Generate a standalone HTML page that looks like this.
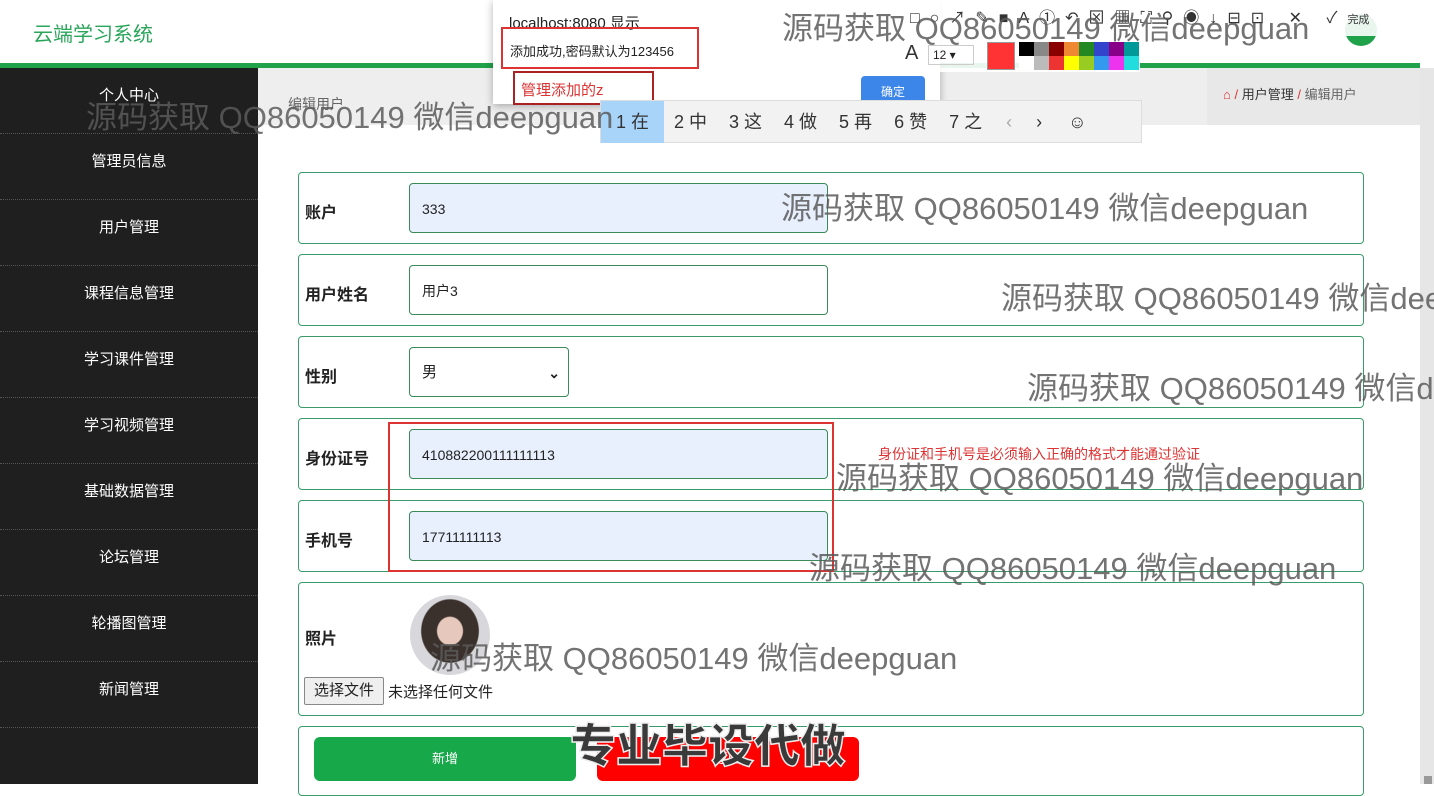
<!DOCTYPE html>
<html><head><meta charset="utf-8"><style>
*{box-sizing:border-box;margin:0;padding:0}
body{width:1434px;height:784px;overflow:hidden;position:relative;background:#fff;font-family:"Liberation Sans","Noto Sans CJK SC",sans-serif;color:#222}
.a{position:absolute}
.side{left:0;top:68px;width:258px;height:716px;background:#1e1f1e}
.si{position:absolute;left:0;width:258px;height:66px;color:#fff;font-size:15px;text-align:center;line-height:56px;border-bottom:1px dotted #555}
.row{position:absolute;left:298px;width:1066px;border:1.5px solid #3a9a6a;border-radius:4px;background:#fff}
.lbl{position:absolute;left:6px;font-weight:bold;font-size:16px}
.inp{position:absolute;left:110px;width:419px;height:50px;border:1px solid #3a8a5a;border-radius:4px;font-size:14px;padding-left:12px;line-height:50px}
.wm{position:absolute;color:rgba(90,90,90,.85);font-size:31px;white-space:nowrap;font-family:"Liberation Sans","Noto Sans CJK SC",sans-serif}
</style></head><body>
<div class="a" style="left:33px;top:18px;color:#2aa55a;font-size:20px">云端学习系统</div>
<div class="a" style="left:0;top:63px;width:1420px;height:5px;background:#1fa24a"></div>
<div class="a" style="left:1345px;top:14px;width:32px;height:32px;border-radius:50%;background:#1fa24a"></div>
<div class="a" style="left:1420px;top:68px;width:14px;height:716px;background:#e6e6e6"></div>
<div class="a" style="left:1424px;top:776px;width:8px;height:8px;background:#999"></div>
<div class="a side">
<div class="si" style="top:0">个人中心</div>
<div class="si" style="top:66px">管理员信息</div>
<div class="si" style="top:132px">用户管理</div>
<div class="si" style="top:198px">课程信息管理</div>
<div class="si" style="top:264px">学习课件管理</div>
<div class="si" style="top:330px">学习视频管理</div>
<div class="si" style="top:396px">基础数据管理</div>
<div class="si" style="top:462px">论坛管理</div>
<div class="si" style="top:528px">轮播图管理</div>
<div class="si" style="top:594px">新闻管理</div>
</div>
<div class="a" style="left:258px;top:68px;width:962px;height:57px;background:#eeeeee"></div>
<div class="a" style="left:288px;top:94px;color:#666;font-size:14px">编辑用户</div>
<div class="a" style="left:1207px;top:68px;width:213px;height:57px;background:#e8e8e8;font-size:13px;line-height:54px;padding-left:16px;color:#333"><span style="color:#d33">⌂ / </span>用户管理 <span style="color:#d33">/</span> <span style="color:#666">编辑用户</span></div>

<div class="row" style="top:172px;height:72px"><div class="lbl" style="top:26px">账户</div><div class="inp" style="top:10px;background:#e8f0fe">333</div></div>
<div class="row" style="top:254px;height:72px"><div class="lbl" style="top:26px">用户姓名</div><div class="inp" style="top:10px">用户3</div></div>
<div class="row" style="top:336px;height:72px"><div class="lbl" style="top:26px">性别</div><div class="inp" style="top:10px;width:160px;font-size:15px">男<span style="position:absolute;right:8px;font-size:14px;font-weight:bold">⌄</span></div></div>
<div class="row" style="top:418px;height:72px"><div class="lbl" style="top:26px">身份证号</div><div class="inp" style="top:10px;background:#e8f0fe">410882200111111113</div></div>
<div class="row" style="top:500px;height:72px"><div class="lbl" style="top:26px">手机号</div><div class="inp" style="top:10px;background:#e8f0fe">17711111113</div></div>
<div class="row" style="top:582px;height:134px"><div class="lbl" style="top:42px">照片</div>
<div class="a" style="left:111px;top:12px;width:80px;height:80px;border-radius:50%;background:radial-gradient(ellipse at 50% 45%,#e6c9bc 0 22%,#3a302c 24% 50%,#d8d8dc 52%)"></div>
<div class="a" style="left:5px;top:94px;width:80px;height:28px;border:1px solid #888;border-radius:2px;background:#efefef;font-size:15px;text-align:center;line-height:26px">选择文件</div>
<div class="a" style="left:89px;top:98px;font-size:15px">未选择任何文件</div></div>
<div class="row" style="top:726px;height:70px">
<div class="a" style="left:15px;top:10px;width:262px;height:44px;background:#17a84a;border-radius:6px;color:#fff;font-size:13px;text-align:center;line-height:44px">新增</div>
<div class="a" style="left:298px;top:10px;width:262px;height:44px;background:#ff0000;border-radius:6px;color:#fff;font-size:13px;text-align:center;line-height:44px">返回</div></div>
<div class="a" style="left:570px;top:710px;font-size:46px;font-weight:900;color:#3a3a3a;-webkit-text-stroke:1.5px #eee;font-family:'Noto Sans CJK SC',sans-serif">专业毕设代做</div>

<div class="a" style="left:388px;top:422px;width:446px;height:150px;border:2px solid #d33"></div>
<div class="a" style="left:878px;top:444px;color:#d33;font-size:14px">身份证和手机号是必须输入正确的格式才能通过验证</div>

<div class="a" style="left:493px;top:0;width:447px;height:104px;background:#fff;box-shadow:0 2px 8px rgba(0,0,0,.3)"></div>
<div class="a" style="left:509px;top:12px;font-size:15px">localhost:8080 显示</div>
<div class="a" style="left:501px;top:27px;width:198px;height:42px;border:2px solid #d33;font-size:13px;padding:12px 0 0 7px">添加成功,密码默认为123456</div>
<div class="a" style="left:513px;top:71px;width:141px;height:34px;border:2px solid #a22;color:#d33;font-size:15px;padding:6px 0 0 6px">管理添加的z</div>
<div class="a" style="left:861px;top:76px;width:64px;height:28px;background:#3b86e8;border-radius:4px;color:#fff;font-size:12px;text-align:center;line-height:32px">确定</div>
<div class="a" style="left:600px;top:100px;width:542px;height:43px;background:#f2f2f2;border:1px solid #ddd;font-size:18px;line-height:42px;color:#333">
<span style="display:inline-block;width:63px;background:#a8d4fa;text-align:center">1 在</span><span style="margin-left:10px">2 中</span><span style="margin-left:22px">3 这</span><span style="margin-left:22px">4 做</span><span style="margin-left:22px">5 再</span><span style="margin-left:22px">6 赞</span><span style="margin-left:22px">7 之</span><span style="margin-left:24px;color:#aaa">‹</span><span style="margin-left:24px">›</span><span style="margin-left:26px">☺</span></div>

<div class="a" style="left:900px;top:0;width:534px;height:36px;background:rgba(255,255,255,.9);font-size:16px;line-height:38px;color:#333;letter-spacing:10px;padding-left:10px">□○↗✎■A①↶⊠▦⛶⚲◉↓⊟⊡ ✕ ✓<span style="font-size:11px;letter-spacing:0">完成</span></div>
<div class="a" style="left:900px;top:36px;width:240px;height:36px;background:rgba(255,255,255,.9)"></div>
<div class="a" style="left:905px;top:42px;font-size:20px;color:#333">A</div>
<div class="a" style="left:928px;top:45px;width:46px;height:20px;border:1px solid #ccc;font-size:12px;padding-left:4px;line-height:18px">12 ▾</div>
<div class="a" style="left:987px;top:42px;width:28px;height:28px;background:#f33;border:1px solid #999"></div>
<div class="a" style="left:1019px;top:42px;width:120px;height:28px;background:linear-gradient(90deg,#000 0 12.5%,#888 0 25%,#800 0 37.5%,#e83 0 50%,#282 0 62.5%,#34c 0 75%,#808 0 87.5%,#099 0);clip-path:inset(0 0 50% 0)"></div>
<div class="a" style="left:1019px;top:56px;width:120px;height:14px;background:linear-gradient(90deg,#fff 0 12.5%,#bbb 0 25%,#e33 0 37.5%,#ff0 0 50%,#9c2 0 62.5%,#39e 0 75%,#e3e 0 87.5%,#2dd 0)"></div>

<div class="wm" style="left:86px;top:92px">源码获取 QQ86050149 微信deepguan</div>
<div class="wm" style="left:782px;top:3px">源码获取 QQ86050149 微信deepguan</div>
<div class="wm" style="left:781px;top:183px">源码获取 QQ86050149 微信deepguan</div>
<div class="wm" style="left:1001px;top:273px">源码获取 QQ86050149 微信deepguan</div>
<div class="wm" style="left:1027px;top:363px">源码获取 QQ86050149 微信deepguan</div>
<div class="wm" style="left:836px;top:453px">源码获取 QQ86050149 微信deepguan</div>
<div class="wm" style="left:809px;top:543px">源码获取 QQ86050149 微信deepguan</div>
<div class="wm" style="left:430px;top:633px">源码获取 QQ86050149 微信deepguan</div>
</body></html>
